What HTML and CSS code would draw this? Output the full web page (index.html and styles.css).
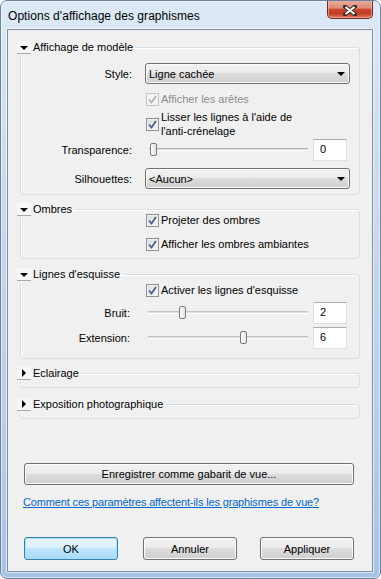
FILE: index.html
```html
<!DOCTYPE html>
<html lang="fr">
<head>
  <meta charset="UTF-8">
  <title>Options d'affichage des graphismes</title>
  <link rel="stylesheet" href="styles.css">
</head>
<body>
<div class="window">
  <div class="titlebar">
    <span class="title">Options d'affichage des graphismes</span>
    <span class="close">
      <svg width="14" height="11" viewBox="0 0 14 11">
        <path d="M2 1.5 L12 9.5 M12 1.5 L2 9.5" stroke="#3a2a28" stroke-width="4" stroke-linecap="square"/>
        <path d="M2.5 2 L11.5 9 M11.5 2 L2.5 9" stroke="#fff" stroke-width="2.2"/>
      </svg>
    </span>
  </div>

  <div class="client">
    <!-- Affichage de modele -->
    <fieldset class="group g-model">
      <legend><span class="tri down"></span>Affichage de modèle</legend>
      <div class="row r-style">
        <span class="lbl">Style:</span>
        <div class="combo">Ligne cachée<span class="arrow"></span></div>
      </div>
      <div class="row check r-edges disabled">
        <span class="cb"><svg width="9" height="9" viewBox="0 0 9 9"><path d="M1 4.5 L3.5 7.5 L8 1" fill="none" stroke="#b4b4b4" stroke-width="1.8"/></svg></span>
        <span>Afficher les arêtes</span>
      </div>
      <div class="row check r-smooth">
        <span class="cb"><svg width="9" height="9" viewBox="0 0 9 9"><path d="M1 4.5 L3.5 7.5 L8 1" fill="none" stroke="#4b5f8c" stroke-width="1.8"/></svg></span>
        <span class="two">Lisser les lignes à l'aide de<br>l'anti-crénelage</span>
      </div>
      <div class="row r-transp">
        <span class="lbl">Transparence:</span>
        <div class="slider"><span class="track"></span><span class="thumb" style="left:4px"></span></div>
        <div class="num">0</div>
      </div>
      <div class="row r-silh">
        <span class="lbl">Silhouettes:</span>
        <div class="combo">&lt;Aucun&gt;<span class="arrow"></span></div>
      </div>
    </fieldset>

    <!-- Ombres -->
    <fieldset class="group g-shadow">
      <legend><span class="tri down"></span>Ombres</legend>
      <div class="row check r-cast">
        <span class="cb"><svg width="9" height="9" viewBox="0 0 9 9"><path d="M1 4.5 L3.5 7.5 L8 1" fill="none" stroke="#4b5f8c" stroke-width="1.8"/></svg></span>
        <span>Projeter des ombres</span>
      </div>
      <div class="row check r-ambient">
        <span class="cb"><svg width="9" height="9" viewBox="0 0 9 9"><path d="M1 4.5 L3.5 7.5 L8 1" fill="none" stroke="#4b5f8c" stroke-width="1.8"/></svg></span>
        <span>Afficher les ombres ambiantes</span>
      </div>
    </fieldset>

    <!-- Lignes d'esquisse -->
    <fieldset class="group g-sketch">
      <legend><span class="tri down"></span>Lignes d'esquisse</legend>
      <div class="row check r-sketch">
        <span class="cb"><svg width="9" height="9" viewBox="0 0 9 9"><path d="M1 4.5 L3.5 7.5 L8 1" fill="none" stroke="#4b5f8c" stroke-width="1.8"/></svg></span>
        <span>Activer les lignes d'esquisse</span>
      </div>
      <div class="row r-noise">
        <span class="lbl short">Bruit:</span>
        <div class="slider wide"><span class="track light"></span><span class="thumb" style="left:34px"></span></div>
        <div class="num">2</div>
      </div>
      <div class="row r-ext">
        <span class="lbl short">Extension:</span>
        <div class="slider wide"><span class="track light"></span><span class="thumb" style="left:95px"></span></div>
        <div class="num">6</div>
      </div>
    </fieldset>

    <fieldset class="group g-light">
      <legend><span class="tri right"></span>Eclairage</legend>
    </fieldset>

    <fieldset class="group g-expo">
      <legend><span class="tri right"></span>Exposition photographique</legend>
    </fieldset>

    <button class="btn save">Enregistrer comme gabarit de vue...</button>
    <a class="help" href="#">Comment ces paramètres affectent-ils les graphismes de vue?</a>

    <div class="actions">
      <button class="btn default">OK</button>
      <button class="btn cancel">Annuler</button>
      <button class="btn apply">Appliquer</button>
    </div>
  </div>
</div>
</body>
</html>
```

FILE: styles.css
```css
body {
  margin: 0;
  font-family: "Liberation Sans", Arial, sans-serif;
  font-size: 11px;
  color: #000;
  background: #fff;
}

.window {
  width: 381px;
  height: 579px;
  box-sizing: border-box;
  border: 1px solid #6c83a0;
  border-radius: 7px;
  background: linear-gradient(#dde9f6 0%, #c9dbef 30%, #b9d0ea 70%, #a8c4e5 100%);
  box-shadow: inset 0 0 0 1px rgba(255,255,255,0.55);
  display: flex;
  flex-direction: column;
  overflow: hidden;
}

.titlebar {
  height: 28px;
  flex: none;
  display: flex;
  justify-content: space-between;
  align-items: flex-start;
  padding: 0 7px 0 7px;
}

.title {
  font-size: 12px;
  line-height: 14px;
  margin-top: 8px;
  letter-spacing: 0.05px;
}

.close {
  width: 46px;
  height: 19px;
  box-sizing: border-box;
  margin-top: -1px;
  border: 1px solid #6e2a20;
  border-top: none;
  border-radius: 0 0 5px 5px;
  background: linear-gradient(#eab0a2 0%, #dc8a75 45%, #c9452d 52%, #c53d26 75%, #de7b60 100%);
  box-shadow: inset 0 0 0 1px rgba(255,210,200,0.5);
  display: flex;
  align-items: center;
  justify-content: center;
  padding-top: 2px;
}

.client {
  flex: 1;
  margin: 0 7px 6px 6px;
  border: 1px solid #7f8d9f;
  background: #f0f0f0;
  box-shadow: 0 0 0 1px rgba(255,255,255,0.6);
  padding-top: 10px;
}

.group {
  margin: 0 12px 0 12px;
  padding: 0;
  border: 1px solid #d5dfe5;
  border-radius: 3px;
  box-shadow: inset 1px 1px 0 #fff;
  min-width: 0;
}

.group legend {
  margin-left: -4px;
  padding: 0 3px 0 0;
  height: 15px;
  line-height: 14px;
  white-space: nowrap;
}

.tri {
  display: inline-block;
  vertical-align: top;
  width: 14px;
  height: 13px;
  margin-top: 1px;
  margin-right: 2px;
  box-sizing: border-box;
  background: #f7f7f7;
  border-bottom: 1px solid #a8a8a8;
  position: relative;
}

.tri::after {
  content: "";
  position: absolute;
  width: 0;
  height: 0;
}

.tri.down::after {
  left: 3px;
  top: 5px;
  border-left: 4px solid transparent;
  border-right: 4px solid transparent;
  border-top: 4px solid #000;
}

.tri.right::after {
  left: 5px;
  top: 2px;
  border-top: 4px solid transparent;
  border-bottom: 4px solid transparent;
  border-left: 4px solid #000;
}

.row {
  display: flex;
  align-items: center;
}

.lbl {
  width: 111px;
  flex: none;
  text-align: right;
}

.lbl.short {
  width: 109px;
}

.check {
  padding-left: 125px;
  line-height: 14px;
}

.cb {
  width: 13px;
  height: 13px;
  box-sizing: border-box;
  flex: none;
  border: 1px solid #8e8f8f;
  background: linear-gradient(135deg, #dcdcdc, #f6f6f6);
  box-shadow: inset 0 0 0 1px #f3f3f3;
  display: flex;
  align-items: center;
  justify-content: center;
  margin-right: 2px;
}

.disabled {
  color: #8d8d8d;
}

.disabled .cb {
  border-color: #c5c5c5;
  background: #f4f4f4;
}

.combo {
  width: 205px;
  height: 21px;
  margin-left: 13px;
  box-sizing: border-box;
  border: 1px solid #707070;
  border-radius: 3px;
  background: linear-gradient(#f2f2f2 0%, #ebebeb 49%, #dddddd 50%, #cfcfcf 100%);
  box-shadow: inset 0 0 0 1px #fbfbfb;
  padding-left: 3px;
  display: flex;
  align-items: center;
  justify-content: space-between;
}

.arrow {
  width: 0;
  height: 0;
  margin-right: 4px;
  border-left: 4px solid transparent;
  border-right: 4px solid transparent;
  border-top: 4px solid #000;
}

.slider {
  position: relative;
  width: 165px;
  height: 22px;
  margin-left: 14px;
  flex: none;
}

.slider.wide {
  width: 166px;
  margin-left: 15px;
}

.track {
  display: block;
  margin: 9px 3px 0;
  height: 1px;
  border-top: 1px solid #b0b0b0;
  border-bottom: 1px solid #fff;
  background: #dcdcdc;
}

.track.light {
  border-top-color: #c4c4c4;
}

.thumb {
  position: absolute;
  top: 4px;
  width: 7px;
  height: 13px;
  box-sizing: border-box;
  border: 1px solid #7a7a7a;
  border-radius: 2px;
  background: linear-gradient(90deg, #fdfdfd, #e3e3e3);
}

.num {
  width: 34px;
  height: 22px;
  margin-left: 2px;
  box-sizing: border-box;
  border: 1px solid #dbdfe6;
  border-top-color: #abadb3;
  background: #fff;
  padding-left: 6px;
  line-height: 18px;
}

/* row spacing, measured from the dialog */
.r-style { margin-top: 8px; }
.r-edges { margin-top: 8px; }
.r-smooth { margin-top: 4px; height: 28px; }
.r-transp { margin-top: 1px; }
.r-silh { margin-top: 7px; }
.g-model { padding-bottom: 5px; }

.g-shadow { margin-top: 7px; padding-bottom: 7px; }
.r-cast { margin-top: -4px; }
.r-ambient { margin-top: 10px; }

.g-sketch { margin-top: 8px; padding-bottom: 9px; }
.r-sketch { margin-top: 1px; }
.r-noise { margin-top: 5px; }
.r-ext { margin-top: 3px; }

.g-light { margin-top: 7px; padding-bottom: 6px; }
.g-expo { margin-top: 9px; padding-bottom: 6px; }

.btn {
  font-family: inherit;
  font-size: 11px;
  color: #000;
  height: 23px;
  width: 94px;
  padding: 0;
  border: 1px solid #707070;
  border-radius: 3px;
  background: linear-gradient(#f2f2f2 0%, #ebebeb 49%, #dddddd 50%, #cfcfcf 100%);
  box-shadow: inset 0 0 0 1px #fcfcfc;
}

.btn.save {
  display: block;
  width: 330px;
  height: 22px;
  margin: 44px 0 0 16px;
}

.btn.default {
  border-color: #3c7fb1;
  background: linear-gradient(#eaf6fd 0%, #d9f0fc 49%, #bee6fd 50%, #a7d9f5 100%);
  box-shadow: inset 0 0 0 1px #a6e0fd;
}

.help {
  display: block;
  margin: 10px 0 0 15px;
  line-height: 14px;
  color: #0066cc;
  letter-spacing: -0.15px;
}

.actions {
  display: flex;
  margin: 28px 0 0 16px;
}

.btn.cancel { margin-left: 25px; }
.btn.apply { margin-left: 23px; }
```
